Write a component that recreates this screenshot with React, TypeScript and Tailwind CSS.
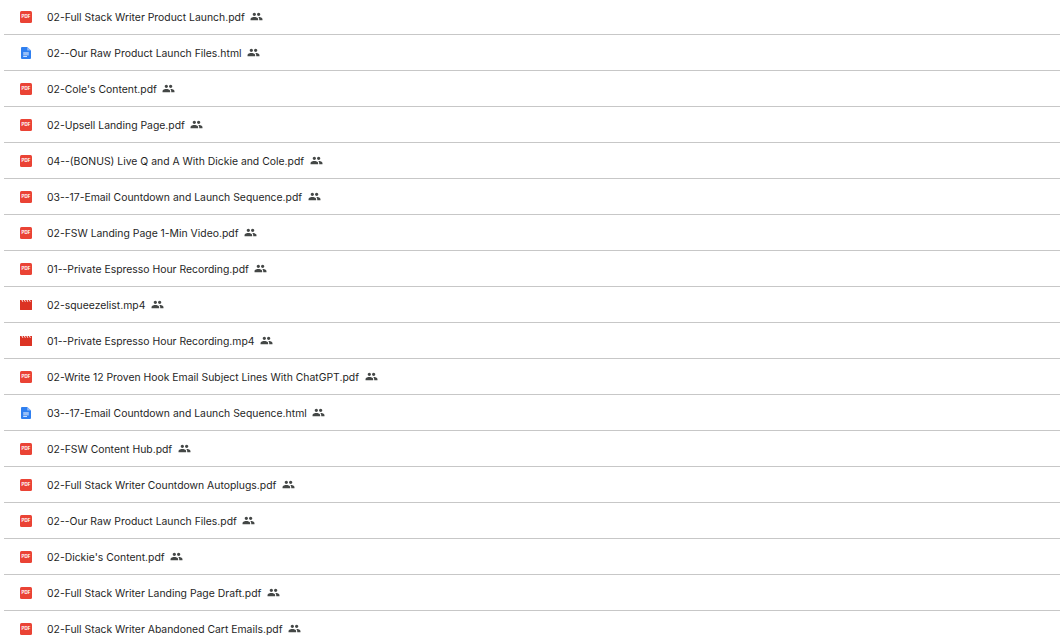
const files = [
  { name: "02-Full Stack Writer Product Launch.pdf", type: "pdf" },
  { name: "02--Our Raw Product Launch Files.html", type: "doc" },
  { name: "02-Cole's Content.pdf", type: "pdf" },
  { name: "02-Upsell Landing Page.pdf", type: "pdf" },
  { name: "04--(BONUS) Live Q and A With Dickie and Cole.pdf", type: "pdf" },
  { name: "03--17-Email Countdown and Launch Sequence.pdf", type: "pdf" },
  { name: "02-FSW Landing Page 1-Min Video.pdf", type: "pdf" },
  { name: "01--Private Espresso Hour Recording.pdf", type: "pdf" },
  { name: "02-squeezelist.mp4", type: "video" },
  { name: "01--Private Espresso Hour Recording.mp4", type: "video" },
  { name: "02-Write 12 Proven Hook Email Subject Lines With ChatGPT.pdf", type: "pdf" },
  { name: "03--17-Email Countdown and Launch Sequence.html", type: "doc" },
  { name: "02-FSW Content Hub.pdf", type: "pdf" },
  { name: "02-Full Stack Writer Countdown Autoplugs.pdf", type: "pdf" },
  { name: "02--Our Raw Product Launch Files.pdf", type: "pdf" },
  { name: "02-Dickie's Content.pdf", type: "pdf" },
  { name: "02-Full Stack Writer Landing Page Draft.pdf", type: "pdf" },
  { name: "02-Full Stack Writer Abandoned Cart Emails.pdf", type: "pdf" },
];

function FileIcon({ type }: { type: string }) {
  if (type === "doc") {
    return (
      <svg viewBox="0 0 12 12" className="h-3 w-3 shrink-0">
        <path fill="#2f7ff0" d="M2 0h5.2L11 3.4V11a1 1 0 0 1-1 1H2a1 1 0 0 1-1-1V1a1 1 0 0 1 1-1z" />
        <path fill="#fff" d="M3.2 5.6h5.6v.9H3.2zM3.2 7.4h5.6v.9H3.2zM3.2 9.2h3.8v.8H3.2z" />
        <path fill="#8fbaf8" d="M7.2 0 11 3.4H7.2z" />
      </svg>
    );
  }
  if (type === "video") {
    return (
      <svg viewBox="0 0 12 12" className="h-3 w-3 shrink-0">
        <path
          fill="#dc3324"
          d="M0 1h1.4l1 1.7h1L2.4 1h1.5l1 1.7h1L4.9 1h1.5l1 1.7h1L7.4 1h1.5l1 1.7h1L9.9 1H12v9.4a.6.6 0 0 1-.6.6H.6a.6.6 0 0 1-.6-.6z"
        />
      </svg>
    );
  }
  return (
    <div className="flex h-3 w-3 shrink-0 items-center justify-center rounded-[1.5px] bg-[#ea4335]">
      <span className="text-[4.5px] leading-none font-bold text-[#fff]">PDF</span>
    </div>
  );
}

function SharedIcon() {
  return (
    <svg viewBox="0 0 24 24" className="h-[13px] w-[13px] shrink-0 fill-[#444746]">
      <path d="M16 11c1.66 0 2.99-1.34 2.99-3S17.66 5 16 5s-3 1.34-3 3 1.34 3 3 3zm-8 0c1.66 0 2.99-1.34 2.99-3S9.66 5 8 5 5 6.34 5 8s1.34 3 3 3zm0 2c-2.33 0-7 1.17-7 3.5V19h14v-2.5c0-2.33-4.67-3.5-7-3.5zm8 0c-.29 0-.62.02-.97.05 1.16.84 1.97 1.97 1.97 3.45V19h6v-2.5c0-2.33-4.67-3.5-7-3.5z" />
    </svg>
  );
}

export default function App() {
  return (
    <div className="h-[643px] overflow-hidden bg-white font-['Inter',sans-serif]">
      <ul className="-mt-px ml-1">
        {files.map((file, i) => (
          <li key={i} className="flex h-9 items-center border-b border-[#c7c7c7] pt-px pl-4">
            <FileIcon type={file.type} />
            <span className="ml-[15px] pt-0.5 text-[10.4px] text-[#1f1f1f]">{file.name}</span>
            <span className="ml-[5.5px] flex -translate-y-px">
              <SharedIcon />
            </span>
          </li>
        ))}
      </ul>
    </div>
  );
}
